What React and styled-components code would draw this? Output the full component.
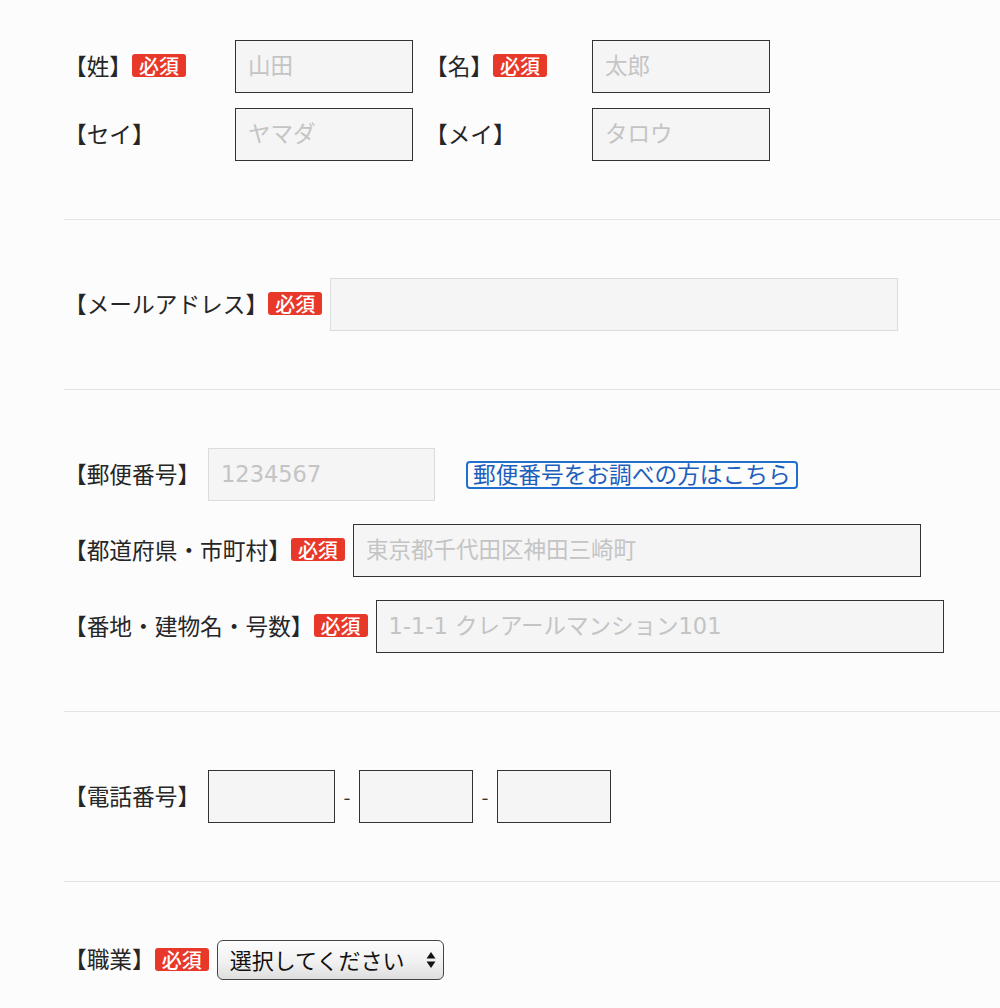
import styled, { createGlobalStyle } from 'styled-components';

const GlobalStyle = createGlobalStyle`
  body {
    margin: 0;
    background: #fcfcfc;
    color: #222;
    font-family: "Noto Sans CJK JP", "Noto Sans", sans-serif;
  }
`;

export default function App() {
  return (
    <>
      <GlobalStyle />
      <Form>
        <Section $first>
          <NameGrid>
            <Field>
              <Label>【姓】</Label>
              <Badge>必須</Badge>
            </Field>
            <TextInput $tone="dark" $w={178} placeholder="山田" />
            <Field>
              <Label>【名】</Label>
              <Badge>必須</Badge>
            </Field>
            <TextInput $tone="dark" $w={178} placeholder="太郎" />
            <Field>
              <Label>【セイ】</Label>
            </Field>
            <TextInput $tone="dark" $w={178} placeholder="ヤマダ" />
            <Field>
              <Label>【メイ】</Label>
            </Field>
            <TextInput $tone="dark" $w={178} placeholder="タロウ" />
          </NameGrid>
        </Section>

        <Section>
          <Field>
            <Label>【メールアドレス】</Label>
            <Badge>必須</Badge>
            <TextInput $tone="light" $w={568} $gap />
          </Field>
        </Section>

        <Section>
          <Stack>
            <Field>
              <Label $w={144}>【郵便番号】</Label>
              <TextInput $tone="light" $w={227} placeholder="1234567" />
              <ZipLink href="#">郵便番号をお調べの方はこちら</ZipLink>
            </Field>
            <Field>
              <Label>【都道府県・市町村】</Label>
              <Badge>必須</Badge>
              <TextInput $tone="dark" $w={568} $gap placeholder="東京都千代田区神田三崎町" />
            </Field>
            <Field>
              <Label>【番地・建物名・号数】</Label>
              <Badge>必須</Badge>
              <TextInput $tone="dark" $w={568} $gap placeholder="1-1-1 クレアールマンション101" />
            </Field>
          </Stack>
        </Section>

        <Section>
          <Field>
            <Label $w={144}>【電話番号】</Label>
            <TextInput $tone="dark" $w={127} />
            <Dash>-</Dash>
            <TextInput $tone="dark" $w={114} />
            <Dash>-</Dash>
            <TextInput $tone="dark" $w={114} />
          </Field>
        </Section>

        <Section $last>
          <Field>
            <Label>【職業】</Label>
            <Badge>必須</Badge>
            <SelectWrap>
              <Select defaultValue="">
                <option value="">選択してください</option>
                <option value="1">会社員</option>
                <option value="2">学生</option>
              </Select>
              <SelectArrows width="10" height="20" viewBox="0 0 10 20">
                <path d="M5 2 L9.5 8.5 L0.5 8.5 Z" fill="#111" />
                <path d="M5 18 L9.5 11.5 L0.5 11.5 Z" fill="#111" />
              </SelectArrows>
            </SelectWrap>
          </Field>
        </Section>
      </Form>
    </>
  );
}

const Form = styled.form`
  margin-left: 64px;
`;

const Section = styled.div`
  padding: ${(p) => (p.$first ? '40px' : '58px')} 0 58px;
  border-bottom: ${(p) => (p.$last ? 'none' : '1px solid #e4e4e4')};
`;

const NameGrid = styled.div`
  display: grid;
  grid-template-columns: 171px 190px 167px 178px;
  row-gap: 15px;
  align-items: center;
`;

const Stack = styled.div`
  display: flex;
  flex-direction: column;
  gap: 23px;
`;

const Field = styled.div`
  display: flex;
  align-items: center;
`;

const Label = styled.span`
  position: relative;
  top: -1px;
  font-size: 22.7px;
  line-height: 1.2;
  color: #262626;
  white-space: nowrap;
  flex-shrink: 0;
  width: ${(p) => (p.$w ? `${p.$w}px` : 'auto')};
`;

const Badge = styled.span`
  display: inline-block;
  flex-shrink: 0;
  margin-top: -2px;
  background: #e8382a;
  color: #fff;
  font-size: 20px;
  font-weight: 500;
  line-height: 23px;
  padding: 0 7px;
  border-radius: 3px;
  white-space: nowrap;
`;

const TextInput = styled.input`
  box-sizing: border-box;
  width: ${(p) => p.$w}px;
  height: 53px;
  margin-left: ${(p) => (p.$gap ? '8px' : '0')};
  padding: 0 12px 2px;
  border: 1px solid ${(p) => (p.$tone === 'dark' ? '#333' : '#dcdcdc')};
  border-radius: 0;
  background: #f5f5f5;
  font-family: "DejaVu Sans", "Noto Sans CJK JP", sans-serif;
  font-size: 22.5px;
  color: #222;
  outline: none;

  &::placeholder {
    color: #c4c4c4;
  }
`;

const ZipLink = styled.a`
  display: inline-block;
  margin-left: 31px;
  padding: 0 5px;
  height: 28px;
  box-sizing: border-box;
  line-height: 22px;
  border: 2px solid #1f6fcf;
  border-radius: 4px;
  color: #1d5fbc;
  font-size: 22.7px;
  text-decoration: none;
  white-space: nowrap;
`;

const Dash = styled.span`
  width: 24px;
  text-align: center;
  font-size: 20px;
  color: #333;
`;

const SelectWrap = styled.div`
  position: relative;
  margin-left: 8px;
`;

const Select = styled.select`
  appearance: none;
  box-sizing: border-box;
  width: 227px;
  height: 40px;
  padding: 0 30px 3px 12px;
  border: 1px solid #444;
  border-radius: 6px;
  background: linear-gradient(180deg, #fdfdfd 0%, #f1f1f1 55%, #dedede 100%);
  font-family: "Noto Sans CJK JP", "Noto Sans", sans-serif;
  font-size: 22px;
  color: #111;
  outline: none;
`;

const SelectArrows = styled.svg`
  position: absolute;
  right: 8px;
  top: 10px;
  pointer-events: none;
`;
